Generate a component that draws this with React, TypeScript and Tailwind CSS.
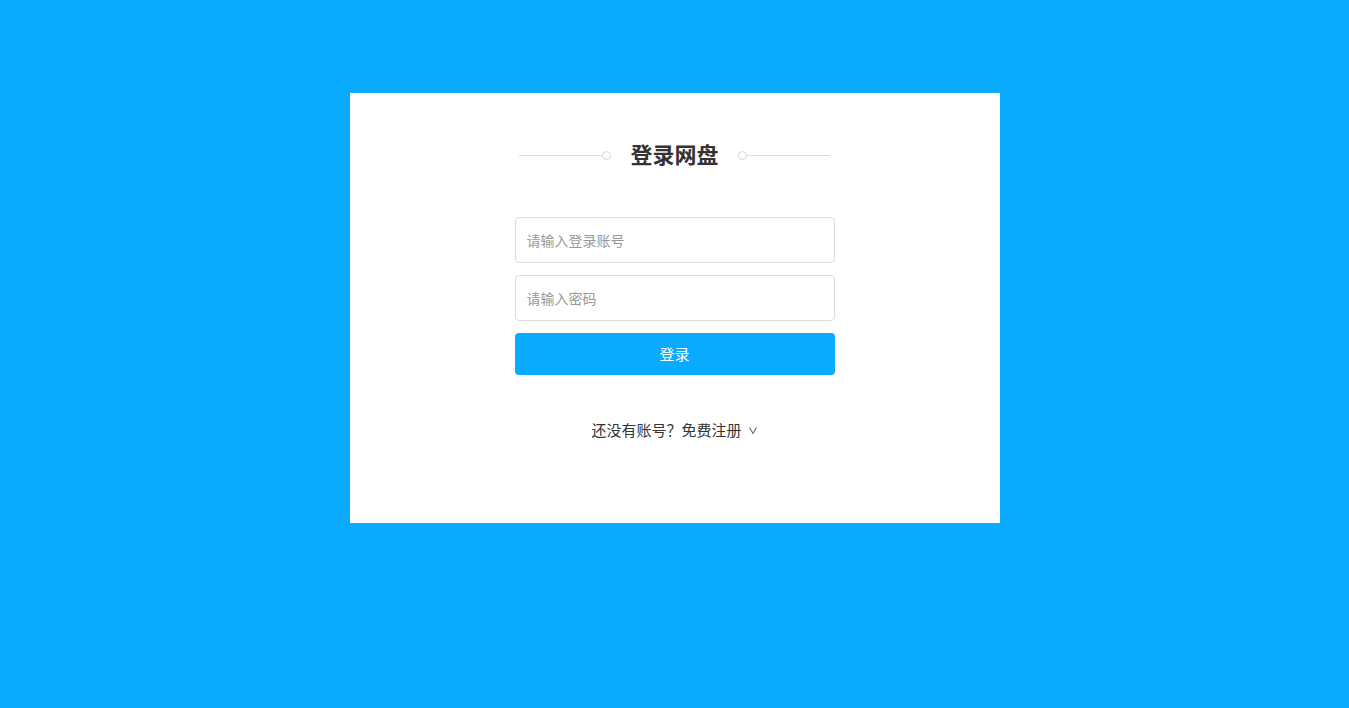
export default function App() {
  return (
    <div
      className="min-h-screen w-full bg-[#0aabff] pt-[93px]"
      style={{ fontFamily: '"Microsoft YaHei", "Noto Sans CJK SC", sans-serif' }}
    >
      <div className="mx-auto h-[430px] w-[650px] bg-white pt-[46px]">
        <div className="flex items-center justify-center">
          <div className="mt-[4px] flex items-center">
            <div className="h-px w-[83px] bg-[#dddddd]" />
            <div className="h-[9px] w-[9px] rounded-full border border-[#d6d6d6]" />
          </div>
          <h1 className="mx-[19px] text-[22px] font-bold leading-[28px] text-[#333333]">登录网盘</h1>
          <div className="mt-[4px] flex items-center">
            <div className="h-[9px] w-[9px] rounded-full border border-[#d6d6d6]" />
            <div className="h-px w-[83px] bg-[#dddddd]" />
          </div>
        </div>

        <form className="mx-auto mt-[50px] flex w-[320px] flex-col" onSubmit={(e) => e.preventDefault()}>
          <input
            type="text"
            placeholder="请输入登录账号"
            className="h-[46px] rounded-[4px] border border-[#dcdcdc] px-[11px] pb-px text-[14px] text-[#333] outline-none placeholder:text-[#999999]"
          />
          <input
            type="password"
            placeholder="请输入密码"
            className="mt-[12px] h-[46px] rounded-[4px] border border-[#dcdcdc] px-[11px] pb-px text-[14px] text-[#333] outline-none placeholder:text-[#999999]"
          />
          <button
            type="submit"
            className="mt-[12px] h-[42px] rounded-[4px] bg-[#0aabff] text-[15px] text-white"
          >
            登录
          </button>
        </form>

        <p className="mt-[45px] flex items-center justify-center text-[15px] leading-[20px] text-[#333333]">
          还没有账号？免费注册
          <svg className="ml-[6px] h-[10px] w-[10px] text-[#5b6b8a]" viewBox="0 0 10 10" fill="none" stroke="currentColor" strokeWidth={1.1}>
            <path d="M1.5 2.5 5 8.5 8.5 2.5" />
          </svg>
        </p>
      </div>
    </div>
  );
}
